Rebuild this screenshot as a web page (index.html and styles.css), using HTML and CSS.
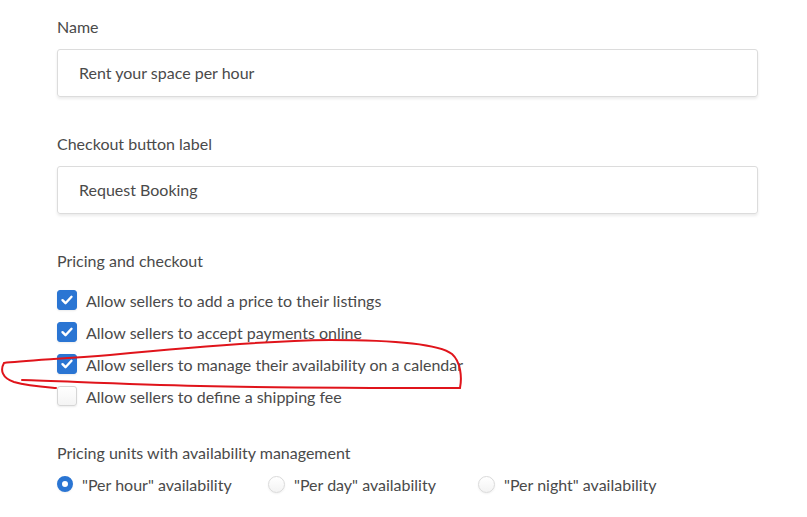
FILE: index.html
```html
<!DOCTYPE html>
<html>
<head>
  <meta charset="UTF-8">
  <title>Listing settings</title>
  <link rel="stylesheet" href="styles.css">
</head>
<body>

  <div class="page">
    <div class="field">
      <label class="field__label">Name</label>
      <div class="field__input">Rent your space per hour</div>
    </div>

    <div class="field">
      <label class="field__label">Checkout button label</label>
      <div class="field__input">Request Booking</div>
    </div>

    <div class="group">
      <div class="group__title">Pricing and checkout</div>
      <ul class="checks">
        <li class="check">
          <span class="check__box check__box--on">
            <svg viewBox="0 0 20 20" width="20" height="20"><path d="M5.5 10.2l3 3 6-6.4" /></svg>
          </span>
          Allow sellers to add a price to their listings
        </li>
        <li class="check">
          <span class="check__box check__box--on">
            <svg viewBox="0 0 20 20" width="20" height="20"><path d="M5.5 10.2l3 3 6-6.4" /></svg>
          </span>
          Allow sellers to accept payments online
        </li>
        <li class="check">
          <span class="check__box check__box--on">
            <svg viewBox="0 0 20 20" width="20" height="20"><path d="M5.5 10.2l3 3 6-6.4" /></svg>
          </span>
          Allow sellers to manage their availability on a calendar
        </li>
        <li class="check">
          <span class="check__box"></span>
          Allow sellers to define a shipping fee
        </li>
      </ul>
    </div>

    <div class="group group--units">
      <div class="group__title">Pricing units with availability management</div>
      <div class="radios">
        <span class="radio"><span class="radio__dot radio__dot--on"></span>"Per hour" availability</span>
        <span class="radio"><span class="radio__dot"></span>"Per day" availability</span>
        <span class="radio"><span class="radio__dot"></span>"Per night" availability</span>
      </div>
    </div>
  </div>

  <!-- hand drawn marker over the calendar option -->
  <svg class="scribble" width="807" height="517" viewBox="0 0 807 517">
    <path d="M22 380 C 60 381, 120 384, 200 386 S 400 388, 460 388
             C 462 378, 461 362, 452 354 C 440 345, 400 340, 330 340
             C 260 341, 180 348, 110 355 C 60 359, 20 361, 4 363
             C 0 370, 2 378, 14 382 C 28 386, 44 387, 56 388" />
  </svg>

</body>
</html>
```

FILE: styles.css
```css
html, body {
  margin: 0;
  padding: 0;
  background: #fff;
}

body {
  font-family: Lato, "Open Sans", sans-serif;
  font-size: 16px;
  color: #4a4a4a;
  position: relative;
}

.page {
  width: 701px;
  padding: 15px 0 0 57px;
}

.field {
  margin-bottom: 35px;
}

.field__label,
.group__title {
  display: block;
  line-height: 24px;
  height: 24px;
}

.field__input {
  margin-top: 10px;
  height: 46px;
  line-height: 46px;
  padding: 0 21px;
  border: 1px solid #dcdcdc;
  border-radius: 3px;
  box-shadow: 0 2px 3px rgba(0, 0, 0, .08);
}

.checks {
  list-style: none;
  margin: 11px 0 0;
  padding: 0;
}

.check {
  display: flex;
  align-items: center;
  height: 32px;
  gap: 9px;
}

.check__box {
  width: 18px;
  height: 18px;
  border: 1px solid #d6d6d6;
  border-radius: 3px;
  background: linear-gradient(#fff, #f4f4f4);
  box-shadow: 0 1px 2px rgba(0, 0, 0, .08);
  position: relative;
}

.check__box--on {
  background: #2a75d3;
  border-color: #2a75d3;
}

.check__box svg {
  position: absolute;
  left: -1px;
  top: -1px;
}

.check__box path {
  fill: none;
  stroke: #fff;
  stroke-width: 2.4;
  stroke-linecap: round;
  stroke-linejoin: round;
}

.group--units {
  margin-top: 29px;
}

.radios {
  display: flex;
  margin-top: 3px;
  height: 32px;
  align-items: center;
}

.radio {
  display: flex;
  align-items: center;
  gap: 9px;
  width: 211px;
}

.radio:nth-child(2) {
  width: 210px;
}

.radio__dot {
  width: 15px;
  height: 15px;
  border: 1px solid #dadada;
  border-radius: 50%;
  background: linear-gradient(#fff, #f3f3f3);
  box-shadow: 0 1px 2px rgba(0, 0, 0, .06);
}

.radio__dot--on {
  width: 6px;
  height: 6px;
  border: 5px solid #2a75d3;
  background: #fff;
}

.scribble {
  position: absolute;
  left: 0;
  top: 0;
  pointer-events: none;
}

.scribble path {
  fill: none;
  stroke: #e0141b;
  stroke-width: 2;
  stroke-linecap: round;
}
```
